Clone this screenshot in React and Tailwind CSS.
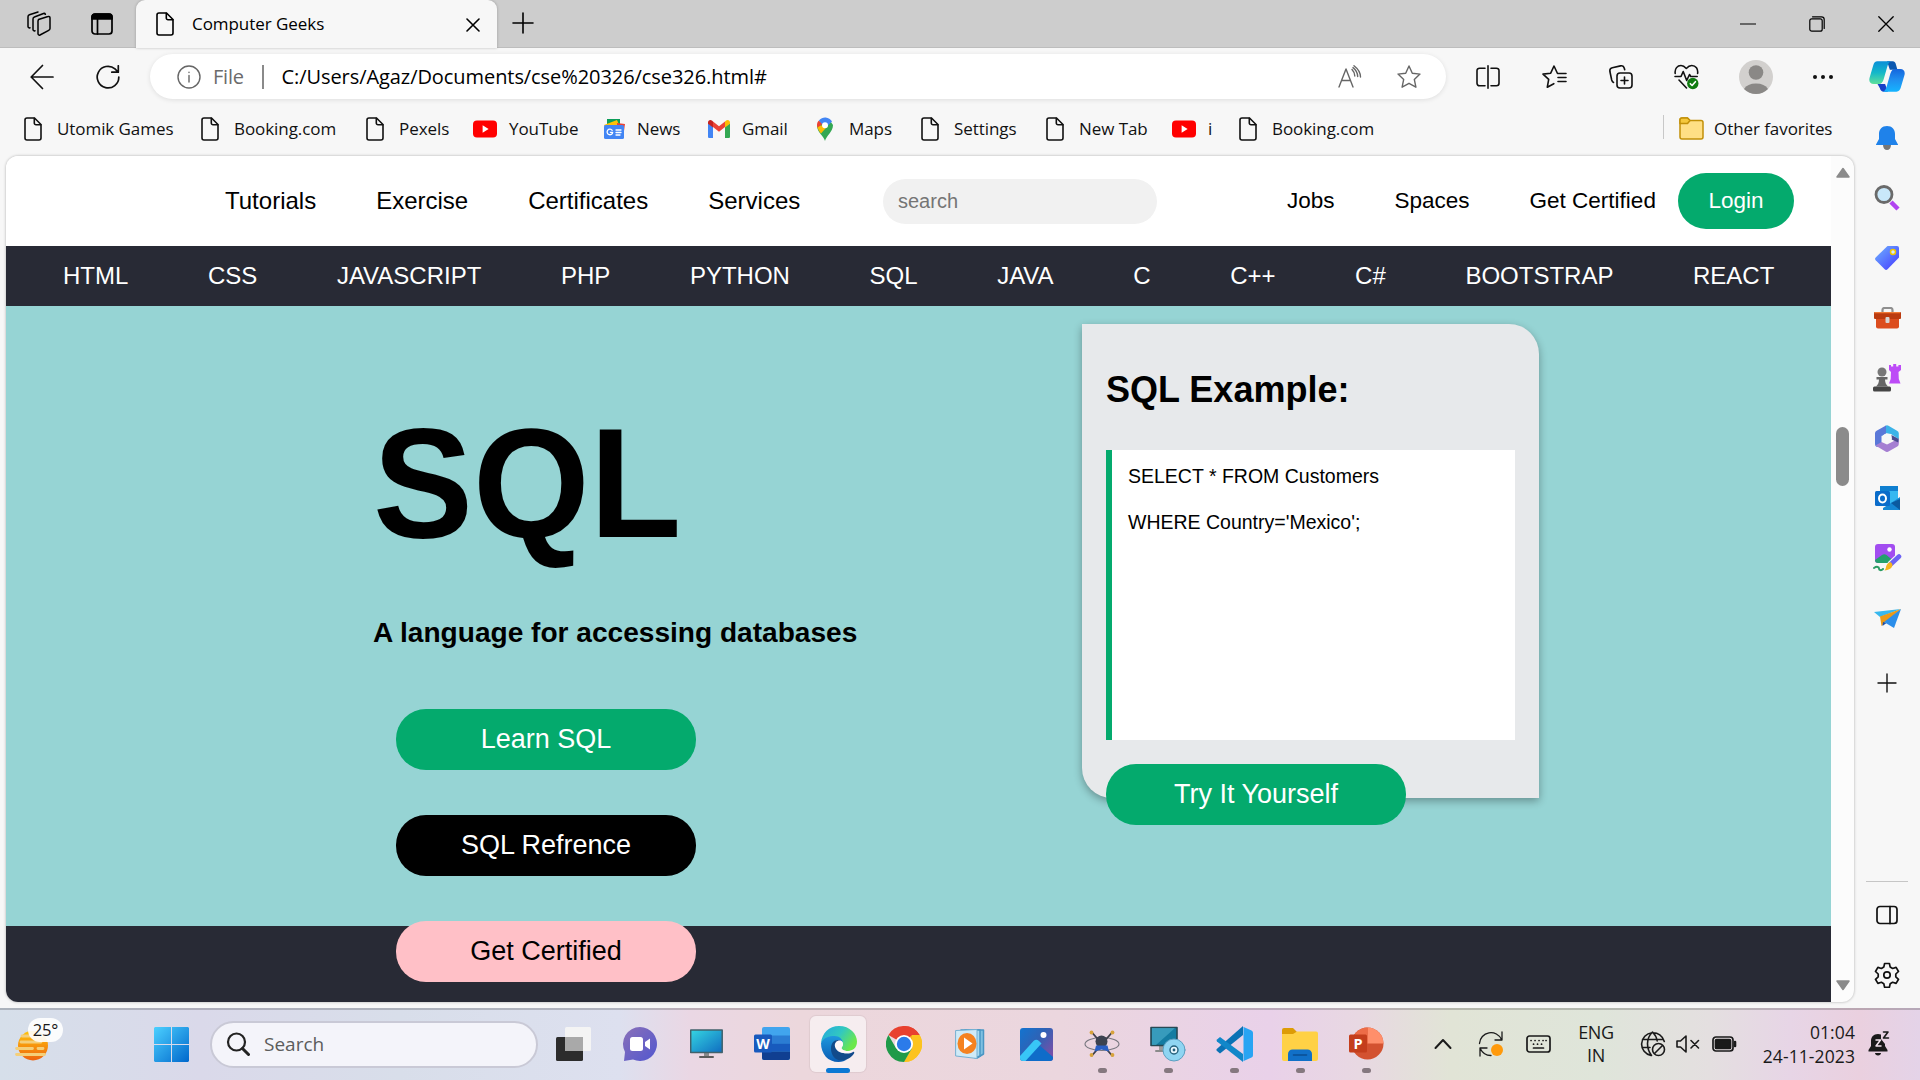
import React from "react";

const UI = "font-['Open_Sans','Noto_Sans',sans-serif]";

function Svg({ w = 24, h = 24, vb = "0 0 24 24", sw = 1.5, children, className = "" }) {
  return (
    <svg width={w} height={h} viewBox={vb} fill="none" stroke="currentColor" strokeWidth={sw} strokeLinecap="round" strokeLinejoin="round" className={"shrink-0 " + className}>
      {children}
    </svg>
  );
}

const Doc = () => (
  <Svg w={18} h={24} vb="0 0 18 24" sw={1.6}>
    <path d="M3 1h7.5L17 7.5V21a2 2 0 0 1-2 2H3a2 2 0 0 1-2-2V3a2 2 0 0 1 2-2Z" />
    <path d="M10.3 1.2V6a1.7 1.7 0 0 0 1.7 1.7h4.8" />
  </Svg>
);

const YouTube = () => (
  <Svg w={24} h={24}>
    <rect x="0" y="3.5" width="24" height="17" rx="4" fill="#f00" stroke="none" />
    <path d="M9.6 8.3v7.4L15.6 12Z" fill="#fff" stroke="none" />
  </Svg>
);

const News = () => (
  <Svg w={22} h={20} vb="0 0 22 20">
    <g stroke="none">
      <rect x="4" y="0" width="13" height="9" fill="#0c9d58" />
      <path d="M1 6 14 1l4 9H3Z" fill="#ffc107" />
      <path d="m14 4 8 1-2 14h-6Z" fill="#ea4335" />
      <rect x="1" y="6" width="20" height="14" rx="1.5" fill="#4285f4" />
    </g>
    <path d="M9.2 11.3a2.8 2.8 0 1 0 .5 2h-2.3M13 11h5M13 13.5h5M13 16h4" stroke="#fff" strokeWidth="1.3" />
  </Svg>
);

const Gmail = () => (
  <Svg w={22} h={18} vb="0 0 22 18">
    <g stroke="none">
      <path d="M0 3v13.5A1.3 1.3 0 0 0 1.3 18H5V7Z" fill="#4285f4" />
      <path d="M22 3v13.5A1.3 1.3 0 0 1 20.7 18H17V7Z" fill="#34a853" />
      <path d="M5 7V1.5L11 6.2 17 1.5V7l-6 4.8Z" fill="#ea4335" />
      <path d="M0 3.500V2.500C0 .3 2.400-.7 4.200.8L5 1.500V7.500L0 3.800Z" fill="#c5221f" />
      <path d="M22 3.500V2.500c0-2.200-2.400-3.200-4.200-1.700L17 1.500v6l5-3.700Z" fill="#fbbc04" />
    </g>
  </Svg>
);

const Maps = () => (
  <Svg w={18} h={24} vb="0 0 18 24">
    <g stroke="none">
      <path d="M9 24C8 19 1 15.500 1 8.500L13 2.200 17 8c0 7-7 11-8 16Z" fill="#34a853" />
      <path d="M1.300 8.500C1.300 12 3.500 14.500 5 16.500L12 8.500Z" fill="#fbbc04" />
      <path d="M2.500 3.800C.6 6 .8 8.800 1.500 10.500L8 6Z" fill="#ea4335" />
      <path d="M2.800 3.500A8 8 0 0 1 16 4.500L9.500 11Z" fill="#4285f4" />
      <circle cx="9" cy="8.300" r="3" fill="#fff" />
    </g>
  </Svg>
);

const Folder = () => (
  <Svg w={25} h={23} vb="0 0 25 23" sw={1.5}>
    <path d="M1 5V3a2 2 0 0 1 2-2h5.500L11 3.500H22a2 2 0 0 1 2 2V20a2 2 0 0 1-2 2H3a2 2 0 0 1-2-2Z" fill="#ffdf85" stroke="#c29008" />
    <path d="M1 6.500V3a2 2 0 0 1 2-2h5.500L11 3.500 8.500 6.500Z" fill="#f5c83c" stroke="#c29008" />
  </Svg>
);

const bookmarks = [
  { w: 177, s: 33, icon: <Doc />, t: "Utomik Games" },
  { w: 165, s: 33, icon: <Doc />, t: "Booking.com" },
  { w: 107, s: 33, icon: <Doc />, t: "Pexels" },
  { w: 130, s: 36, icon: <YouTube />, t: "YouTube" },
  { w: 105, s: 34, icon: <News />, t: "News" },
  { w: 108, s: 34, icon: <Gmail />, t: "Gmail" },
  { w: 105, s: 33, icon: <Maps />, t: "Maps" },
  { w: 125, s: 33, icon: <Doc />, t: "Settings" },
  { w: 126, s: 33, icon: <Doc />, t: "New Tab" },
  { w: 67, s: 36, icon: <YouTube />, t: "i" },
  { w: 150, s: 33, icon: <Doc />, t: "Booking.com" },
];

function TitleBar() {
  return (
    <div className="flex h-12 bg-[#cdcdcd] shadow-[inset_0_-1px_0_#bdbdbd] text-black">
      <div className="flex w-[78px] items-center justify-center">
        <Svg w={26} h={26} vb="0 0 26 26" sw={1.5}>
          <path d="M12.500 8.500 22 5.500a1.500 1.500 0 0 1 2 1.500V17.500a2 2 0 0 1-1.300 1.800L14 24a1.400 1.400 0 0 1-2-1.200V10Z" />
          <path d="M9 19.800c-1 .4-2-.2-2-1.200V8c0-1 .5-1.700 1.400-2L17.500 2.500c.8-.3 1.500 0 1.900.8" />
          <path d="M4 16.800c-1 .4-2-.2-2-1.200V5.800c0-1 .5-1.700 1.400-2L12 1" />
        </Svg>
      </div>
      <div className="flex w-12 items-center justify-center">
        <Svg w={22} h={22} vb="0 0 22 22" sw={1.7}>
          <rect x="1" y="1" width="20" height="20" rx="3" />
          <path d="M1 6V4a3 3 0 0 1 3-3h14a3 3 0 0 1 3 3v2Z" fill="black" />
          <path d="M6.500 6v15" />
        </Svg>
      </div>
      <div className="ml-[10px] flex w-[361px] items-center rounded-t-[9px] bg-[#f7f7f7] pl-5 shadow-[0_0_3px_rgba(0,0,0,0.25)]">
        <Doc />
        <span className={UI + " ml-[18px] w-[134px] whitespace-nowrap pb-px text-[17px] tracking-[-0.05px]"}>Computer Geeks</span>
        <Svg w={14} h={14} vb="0 0 14 14" sw={1.6} className="ml-[140px] mt-px"><path d="m1 1 12 12M13 1 1 13" /></Svg>
      </div>
      <div className="ml-[15px] flex items-center pb-[2px]">
        <Svg w={22} h={22} vb="0 0 22 22" sw={1.6}><path d="M11 1v20M1 11h20" /></Svg>
      </div>
      <div className="ml-auto flex items-center pb-px">
        <div className="flex w-[68px] justify-center"><Svg w={16} h={16} vb="0 0 16 16" sw={1.2}><path d="M.5 8h15" /></Svg></div>
        <div className="flex w-[69px] justify-center">
          <Svg w={16} h={16} vb="0 0 16 16" sw={1.2}>
            <rect x=".8" y="2.800" width="12.400" height="12.400" rx="2" />
            <path d="M3.500.8h9a2.700 2.700 0 0 1 2.700 2.700v9" />
          </Svg>
        </div>
        <div className="flex w-[69px] justify-center"><Svg w={16} h={16} vb="0 0 16 16" sw={1.3}><path d="m.8.8 14.400 14.400M15.200.8.8 15.200" /></Svg></div>
      </div>
    </div>
  );
}

const Slot = ({ c, children }) => <div className={"flex shrink-0 items-center justify-center " + c}>{children}</div>;

function Toolbar() {
  return (
    <div className="flex h-[57px] items-center text-[#111]">
      <Slot c="w-[84px]"><Svg w={24} h={26} vb="0 0 24 26" sw={1.7}><path d="M12.500 1.500 1.200 13l11.300 11.500M1.200 13H23" /></Svg></Slot>
      <Slot c="w-12"><Svg w={24} h={24} sw={1.7}><path d="M22.800 12A10.800 10.800 0 1 1 19 3.900L22 7M22.300.8V7.200h-6.500" /></Svg></Slot>
      <div className="ml-[18px] flex h-[45px] w-[1296px] shrink-0 items-center rounded-full bg-white pl-[27px] pr-[25px] shadow-[0_1px_5px_rgba(0,0,0,0.1)]">
        <Svg w={24} h={24} sw={1.4} className="text-[#666]"><circle cx="12" cy="12" r="11" /><path d="M12 10.500v6.500M12 7.200v.3" /></Svg>
        <span className={UI + " ml-[12px] w-[49px] text-[20px] tracking-[-0.2px] text-[#6b6b6b]"}>File</span>
        <span className="h-6 w-[1.5px] bg-[#8a8a8a]" />
        <span className={UI + " ml-[18px] whitespace-nowrap text-[20px] tracking-[-0.07px] text-black"}>C:/Users/Agaz/Documents/cse%20326/cse326.html#</span>
        <Svg w={24} h={24} sw={1.4} className="ml-auto text-[#666]">
          <path d="m1 22 7-18 7 18M3.700 15.500h8.700M14 4.500c2 2 2.800 4 2.800 6.500M16 .8c4.500 3.500 6.500 7 6.500 11.200M15 2.600c3.500 2.800 4.700 5.500 4.700 9" />
        </Svg>
        <Svg w={24} h={24} sw={1.4} className="ml-[35px] text-[#666]">
          <path d="m12 1 3.300 7.200 7.700.9-5.700 5.300 1.600 7.800L12 18.300l-6.900 3.900 1.600-7.800L1 9.100l7.700-.9Z" />
        </Svg>
      </div>
      <Slot c="ml-2 w-[67px]">
        <Svg w={24} h={24} sw={1.6}><path d="M9 3.200H3.500A2.500 2.500 0 0 0 1 5.700v12.600a2.500 2.500 0 0 0 2.500 2.500H9M15 3.200h5.500A2.500 2.500 0 0 1 23 5.700v12.600a2.500 2.500 0 0 1-2.500 2.500H15M12 .8v22.400" /></Svg>
      </Slot>
      <Slot c="w-[67px]">
        <Svg w={25} h={24} vb="0 0 25 24" sw={1.6}><path d="M18 8.500h-2.500L12 1 8.700 8.200 1 9.100l5.700 5.300-1.400 7.800 6.500-3.500M16 8.500h8M16 12.500h8M16 16.500h8" /></Svg>
      </Slot>
      <Slot c="w-[65px]">
        <Svg w={24} h={24} sw={1.6}>
          <rect x="8" y="8" width="15" height="15" rx="3" /><path d="M15.500 12v7M12 15.500h7M4.500 17.500C3.500 17 3 16.200 2.700 15L.9 6.500C.6 4.500 1.500 3.200 3.300 2.800L11.500.9c2-.4 3.300.5 3.800 2.300l.4 1.500" />
        </Svg>
      </Slot>
      <Slot c="w-[67px]">
        <Svg w={25} h={26} vb="0 0 25 26" sw={1.6}>
          <path d="M1.200 9.500C.5 4.500 3.500 1.500 7 1.500c2.500 0 4 1.500 5.300 3 1.300-1.500 3-3 5.500-3 4 0 6.500 3.500 5.800 8M1 12.500h6l2.200-5 3.500 9 2.800-6 1.200 2h6.500M5 16l7.500 8" />
          <circle cx="18.800" cy="19.500" r="5.700" fill="#107c10" stroke="none" /><path d="m16.300 19.700 1.800 1.800 3.300-3.800" stroke="#fff" />
        </Svg>
      </Slot>
      <Slot c="w-[71px]">
        <Svg w={34} h={34} vb="0 0 34 34">
          <g stroke="none">
            <circle cx="17" cy="17" r="17" fill="#d2d0ce" />
            <circle cx="17" cy="12.500" r="7.300" fill="#8a8886" />
            <path d="M5 29a13 9 0 0 1 24 0 17 17 0 0 1-24 0Z" fill="#8a8886" />
          </g>
        </Svg>
      </Slot>
      <Slot c="w-[63px]"><Svg w={22} h={6} vb="0 0 22 6"><g fill="#111" stroke="none"><circle cx="3" cy="3" r="2" /><circle cx="11" cy="3" r="2" /><circle cx="19" cy="3" r="2" /></g></Svg></Slot>
    </div>
  );
}

function Bookmarks() {
  return (
    <div className={UI + " flex h-[51px] items-center pb-[4px] pl-6 text-[17px] tracking-[-0.07px] text-[#111]"}>
      {bookmarks.map((b, i) => (
        <div key={i} className="flex shrink-0 items-center" style={{ width: b.w }}>
          <span className="shrink-0" style={{ width: b.s }}>{b.icon}</span>
          <span className="whitespace-nowrap">{b.t}</span>
        </div>
      ))}
      <span className="ml-[274px] mb-1 h-6 w-px shrink-0 bg-[#c8c8c8]" />
      <span className="ml-[15px]"><Folder /></span>
      <span className="ml-[10px] whitespace-nowrap">Other favorites</span>
    </div>
  );
}

function Page() {
  return (
    <div className="ml-[6px] flex h-[846px] w-[1848px] overflow-hidden rounded-xl bg-[#fcfcfc] font-['Liberation_Sans',Arial,sans-serif] text-black shadow-[0_0_3px_rgba(0,0,0,0.3)]">
      <div className="w-[1825px]">
        <div className="flex h-[90px] items-center bg-white pl-[219px] text-2xl">
          <div className="flex w-[658px] gap-[60px]">
            <span>Tutorials</span><span>Exercise</span><span>Certificates</span><span>Services</span>
          </div>
          <div className="flex h-[45px] w-[274px] items-center rounded-full bg-[#f1f1f1] pl-[15px] text-[20px] text-[#757575]">search</div>
          <div className="ml-[130px] flex items-center gap-[60px] text-[22.5px]">
            <span>Jobs</span><span>Spaces</span><span>Get Certified</span>
          </div>
          <button className="ml-[22px] h-14 w-[116px] rounded-[28px] bg-[#04aa6d] text-[22.5px] text-white">Login</button>
        </div>
        <div className="flex h-[60px] items-center gap-[79.6px] bg-[#282a35] pl-[57px] text-2xl text-white">
          {["HTML", "CSS", "JAVASCRIPT", "PHP", "PYTHON", "SQL", "JAVA", "C", "C++", "C#", "BOOTSTRAP", "REACT"].map((t) => <span key={t}>{t}</span>)}
        </div>
        <div className="relative z-10 flex h-[620px] items-start bg-[#96d4d4]">
          <div className="w-[1076px] shrink-0 pl-[367px]">
            <h1 className="mt-[104px] w-[310px] origin-[0_127px] scale-y-[1.04] text-[150px] font-bold leading-[150px]">SQL</h1>
            <h3 className="mt-[56px] whitespace-nowrap text-[28.08px] font-bold leading-[34px]">A language for accessing databases</h3>
            <div className="ml-[23px] mt-[59px] flex w-[300px] flex-col gap-[45px] text-[27px]">
              <button className="h-[61px] rounded-[30px] bg-[#04aa6d] text-white">Learn SQL</button>
              <button className="h-[61px] rounded-[30px] bg-black text-white">SQL Refrence</button>
              <button className="h-[61px] rounded-[30px] bg-[#ffc0c7]">Get Certified</button>
            </div>
          </div>
          <div className="mt-[18px] h-[474px] w-[457px] rounded-bl-[30px] rounded-tr-[30px] bg-[#e7e9eb] px-6 pt-[45px] shadow-[0_3px_8px_rgba(0,0,0,0.32)]">
            <h2 className="text-4xl font-bold leading-[42px]">SQL Example:</h2>
            <div className="mt-[39px] h-[290px] border-l-[6px] border-[#04aa6d] bg-white pl-4 pt-[15px] text-[19.5px] leading-[22px]">
              <p>SELECT * FROM Customers</p>
              <p className="mt-6">WHERE Country='Mexico';</p>
            </div>
            <button className="mt-6 h-[61px] w-[300px] rounded-[30px] bg-[#04aa6d] text-[27px] text-white">Try It Yourself</button>
          </div>
        </div>
        <div className="h-[76px] bg-[#282a35]" />
      </div>
      <div className="flex w-[23px] flex-col items-center pb-[11px] pt-[11px]">
        <Svg w={14} h={11} vb="0 0 14 11"><path d="M7 1.500 13 10H1Z" fill="#8b8b8b" stroke="#8b8b8b" /></Svg>
        <div className="mt-[249px] h-[59px] w-[13px] rounded-full bg-[#8b8b8b]" />
        <Svg w={14} h={11} vb="0 0 14 11" className="mt-auto"><path d="M7 9.500 13 1H1Z" fill="#8b8b8b" stroke="#8b8b8b" /></Svg>
      </div>
    </div>
  );
}

function Sidebar() {
  const s = "flex h-[60px] items-center justify-center";
  return (
    <div className="flex h-[960px] w-[66px] flex-col text-[#111]">
      <div className="flex h-[60px] items-center justify-center pb-[3px]">
        <Svg w={36} h={33} vb="0 0 38 34">
          <defs>
            <linearGradient id="cpA" x1="0" y1="0" x2="0" y2="1"><stop offset="0" stopColor="#0a8fd8" /><stop offset=".5" stopColor="#14b8c9" /><stop offset="1" stopColor="#5fe09a" /></linearGradient>
            <linearGradient id="cpB" x1="0" y1="0" x2="0" y2="1"><stop offset="0" stopColor="#1565dd" /><stop offset=".5" stopColor="#2090f0" /><stop offset="1" stopColor="#15b4ff" /></linearGradient>
          </defs>
          <g stroke="none">
            <path d="M19 1h6c2 0 3 1.500 3.500 3.500L30 10h-8Z" fill="#0b57b0" />
            <path d="M9 1h15c-2 0-3.500 2-4.500 5l-4 14c-1 3-2.500 5-5 5H5c-4 0-5.500-3-4.300-7L4.500 5C5.300 2.500 6.500 1 9 1Z" fill="url(#cpA)" />
            <path d="M9 25h8l3 8h-5c-2 0-3-1.500-3.500-3.500Z" fill="#1840c8" />
            <path d="M29 33H14c2 0 3.500-2 4.500-5l4-14c1-3 2.500-5 5-5H33c4 0 5.500 3 4.300 7L33.500 29c-.8 2.500-2 4-4.500 4Z" fill="url(#cpB)" />
          </g>
        </Svg>
      </div>
      <div className={s}>
        <Svg w={24} h={26} vb="0 0 24 26"><g stroke="none"><path d="M8 20h8c0 3-1.800 5-4 5s-4-2-4-5Z" fill="#767676" /><path d="M12 1C7 1 4 4.500 4 9v5l-3 5.500V20h22v-.5L20 14V9c0-4.500-3-8-8-8Z" fill="#1f82ea" /></g></Svg>
      </div>
      <div className={s}>
        <Svg w={26} h={26} vb="0 0 26 26"><path d="m17 17 7 7" stroke="#b144f0" strokeWidth="4.500" strokeLinecap="butt" /><circle cx="10" cy="9.500" r="8" fill="#c9e8fa" stroke="#6a6a6a" strokeWidth="2.800" /></Svg>
      </div>
      <div className={s}>
        <Svg w={24} h={24}>
          <defs><linearGradient id="tg" x1="0" y1="0" x2="1" y2="1"><stop offset="0" stopColor="#6fb4ff" /><stop offset="1" stopColor="#4437ff" /></linearGradient></defs>
          <path d="M12.500 0H22a2 2 0 0 1 2 2v9.500L12.500 23.300a2 2 0 0 1-2.800 0L.7 14.200a2 2 0 0 1 0-2.800Z" fill="url(#tg)" stroke="none" /><circle cx="18" cy="6" r="2.500" fill="#d8e9ff" stroke="#f3c700" />
        </Svg>
      </div>
      <div className={s}>
        <Svg w={27} h={22} vb="0 0 27 22"><path d="M8.500 6V3a2 2 0 0 1 2-2h6a2 2 0 0 1 2 2v3" stroke="#8f8f8f" strokeWidth="2.200" /><g stroke="none"><path d="M2 10h23v9.500a2 2 0 0 1-2 2H4a2 2 0 0 1-2-2Z" fill="#dc4d1e" /><rect x="0" y="5" width="27" height="7" rx="1" fill="#bb3b0f" /><path d="M1 5h25v1.200H0Z" fill="#f17a35" /><rect x="11.500" y="10" width="4" height="6" rx="1" fill="#d6d6d6" /></g></Svg>
      </div>
      <div className={s}>
        <Svg w={28} h={28} vb="0 0 28 28"><g stroke="none"><path d="M16 1h2v1.500h2.200V0h3v2.500h2.200V1H28v5l-2.500 2 .3 7 1.700 4.500H16l1.700-4.500.3-7L16 6Z" fill="#bd4bf7" /><circle cx="9" cy="8" r="4.500" fill="#777" /><path d="M3.500 13h11v2.500H12c0 3 1 5 3 7H3c2-2 3-4 3-7H3.500Z" fill="#666" /><rect x="0" y="22.500" width="18" height="5" rx="1.500" fill="#454545" /></g></Svg>
      </div>
      <div className={s}>
        <Svg w={26} h={27} vb="0 0 26 27"><g stroke="none"><path d="M11.500.8a3 3 0 0 1 3 0L23 5.700a3 3 0 0 1 1.800 2.600v6L17 9 11 8 8 11Z" fill="#3bb3e8" /><path d="M12 .6v8L7.500 11v9L3 22a3 3 0 0 1-2-2.800V8.300a3 3 0 0 1 1.600-2.600Z" fill="#5a78d8" /><path d="m1.500 20.500 6-3.500 5.500 2.500 7-3.500 4.800-2v5a3 3 0 0 1-1.500 2.600l-8.800 5a3 3 0 0 1-3 0Z" fill="#a57fd2" /><path d="m17.500 10 7.300 4v-2l-.5 5.500-6.800-3Z" fill="#4a4a8f" /><circle cx="13" cy="13.500" r="4.800" fill="#f7f7f7" /></g></Svg>
      </div>
      <div className={s}>
        <Svg w={25} h={25} vb="0 0 25 25"><g stroke="none"><rect x="5" y="0" width="18" height="18" fill="#35b8f1" /><path d="M5 0h18v5H5Z" fill="#0f7fd0" /><path d="m25 11-9 6-8 5v2h17Z" fill="#1587d4" /><path d="m25 13-9 4 9 7Z" fill="#0b5a9f" /><rect x="0" y="5" width="15" height="15" rx="1.500" fill="#0a6cca" /></g><ellipse cx="7.500" cy="12.500" rx="3.500" ry="3.900" stroke="#fff" strokeWidth="2" /></Svg>
      </div>
      <div className={s}>
        <Svg w={29} h={28} vb="0 0 29 28"><g stroke="none"><rect x="2" y="0" width="20" height="19" rx="3" fill="#a24df0" /><path d="m2 16 7-5a4 4 0 0 1 4.500 0l6 5-3 3H5a3 3 0 0 1-3-3Z" fill="#24a06c" /><circle cx="16.500" cy="5.500" r="2.200" fill="#fff" /></g><path d="m26 12.500-8 7.500" stroke="#f7f7f7" strokeWidth="7" /><path d="m26 12.500-8 7.500" stroke="#6d63f5" strokeWidth="4.600" /><path d="M18 18.500c3 2 1.500 7.500-6.500 8 2-2 1-4 2.500-6s3-2.500 4-2Z" fill="#f4b51e" stroke="none" /><path d="M1 24c3-2 5-1 5 .5s2 2.500 4 .5" stroke="#2a9c63" strokeWidth="2" /></Svg>
      </div>
      <div className={s}>
        <Svg w={27} h={20} vb="0 0 27 20"><g stroke="none"><path d="M27 1 0 4l6 5Z" fill="#37b8ee" /><path d="M27 1 6 8.500 7.500 18Z" fill="#eb9a17" /><path d="m9 14-.5 4 4-3Z" fill="#1a4fb0" /><path d="m27 1-17 13 10 6Z" fill="#2b8eea" /></g></Svg>
      </div>
      <div className="flex h-[70px] items-center justify-center"><Svg w={20} h={20} vb="0 0 20 20" sw={1.4}><path d="M10 1v18M1 10h18" /></Svg></div>
      <div className="mt-auto flex flex-col items-center pb-[3px]">
        <span className="mb-[3px] h-px w-[42px] bg-[#c6c6c6]" />
        <div className={s}><Svg w={22} h={20} vb="0 0 22 20" sw={1.7}><rect x="1" y="1.500" width="20" height="17" rx="3" /><path d="M14 1.500v17" /></Svg></div>
        <div className={s}>
          <Svg w={26} h={26} vb="0 0 26 26" sw={1.7}>
            <circle cx="13" cy="13" r="3.200" />
            <path d="M10.600 1.500h4.800l.8 3.600 2.400 1.400 3.500-1.100 2.400 4.100-2.700 2.500v2.800l2.700 2.500-2.400 4.100-3.500-1.100-2.400 1.400-.8 3.600h-4.800l-.8-3.600-2.400-1.400-3.500 1.100-2.400-4.100L4.200 14.800V12L1.500 9.500l2.400-4.100 3.500 1.100 2.400-1.400Z" />
          </Svg>
        </div>
      </div>
    </div>
  );
}

const appIcons = [
  <Svg w={36} h={36} vb="0 0 36 36"><g stroke="none"><rect x="0" y="11" width="27" height="24" rx="1.500" fill="#2c2c2c" /><rect x="9" y="1" width="26" height="24" rx="1.500" fill="#f4f4f4" /><path d="M9 11h18v14H9Z" fill="#a9a9a9" /></g></Svg>,
  <Svg w={34} h={34} vb="0 0 34 34"><defs><linearGradient id="tm" x1="0" y1="0" x2="1" y2="1"><stop offset="0" stopColor="#8a70b8" /><stop offset="1" stopColor="#5257cf" /></linearGradient></defs><path d="M17 0a17 17 0 1 1-7 32.500L1 34l1-9A17 17 0 0 1 17 0Z" fill="url(#tm)" stroke="none" /><rect x="7" y="10" width="13" height="14" rx="2.500" fill="#fff" stroke="none" /><path d="m22 15 5-3.500v11L22 19Z" fill="#fff" stroke="none" /></Svg>,
  <Svg w={33} h={30} vb="0 0 33 30"><defs><linearGradient id="pc" x1="0" y1="0" x2="1" y2="1"><stop offset="0" stopColor="#35d6e2" /><stop offset="1" stopColor="#0f6cc0" /></linearGradient></defs><path d="M14 22h5v5h-5Z" fill="#8b8b8b" stroke="none" /><path d="M10 28h13" stroke="#5c5c5c" strokeWidth="2" /><rect x=".7" y="1" width="31.500" height="22.500" fill="url(#pc)" stroke="#42616b" /></Svg>,
  <Svg w={36} h={34} vb="0 0 36 34"><g stroke="none"><rect x="8" y="0" width="28" height="33" rx="2" fill="#41a5ee" /><path d="M8 8.500h28v8H8Z" fill="#2b7cd3" /><path d="M8 16.500h28v8H8Z" fill="#185abd" /><path d="M8 24.500h28V31a2 2 0 0 1-2 2H10a2 2 0 0 1-2-2Z" fill="#103f91" /><rect x="0" y="7.500" width="18" height="18" rx="1.500" fill="#185abd" /></g><text x="9" y="21.500" textAnchor="middle" fontFamily="Open Sans" fontWeight="700" fontSize="14" fill="#fff" stroke="none">W</text></Svg>,
  <Svg w={37} h={36} vb="0 0 37 36"><defs><linearGradient id="ed" x1="0" y1="0" x2="1" y2=".5"><stop offset="0" stopColor="#22a7e0" /><stop offset=".55" stopColor="#32c8c0" /><stop offset="1" stopColor="#6be84a" /></linearGradient><linearGradient id="ee" x1="0" y1="0" x2="0" y2="1"><stop offset="0" stopColor="#1f98dd" /><stop offset="1" stopColor="#0a5cb4" /></linearGradient></defs><g stroke="none"><path d="M1 17C2 7 9 0 19 0c11 0 18 8 18 15.500 0 6-4 9.500-9 9.500-4 0-6.500-1.500-6.500-3 0-1 1.500-1.500 1.500-4 0-3-3-6-7.500-6C8 12 3 14 1 17Z" fill="url(#ed)" /><path d="M1 17c3-5.500 8-7 13.500-7 5 0 8.500 3.500 8.500 8 0-2-2-4-4.500-4-4 0-6 4-6 8 0 7 6 11.500 12 11.500 1 0 2 0 3-.5-2.500 1.800-5.500 3-9 3C8 36 1 28 1 17Z" fill="url(#ee)" /><path d="M11 22.500c0-4.500 2.500-8.500 6.500-8.500 1.500 0 2.800.3 3.500 1-3 1-4.500 4.500-2.500 8 2.500 4.500 9.500 6 14.500 3 1-.5 1.700.4 1 1.500-2.500 4-7.500 7-12.500 7C15 34.500 11 29 11 22.500Z" fill="#114a8b" /><path d="M14.800 19.500c0-2.800 2-5 4.500-5 2.200 0 3.700 1.500 3.700 3.500 0 2.500-1.500 3-1.500 4 0 2 4 3.500 8 3 2-.3 4-1 5-1.500-7 6.500-19 4-19.700-4Z" fill="#fdf6f8" /></g></Svg>,
  <Svg w={36} h={36} vb="0 0 36 36"><g stroke="none"><path d="M18 18 2.400 9a18 18 0 0 1 31.200 0Z" fill="#e8402f" /><path d="M18 0A18 18 0 0 1 33.600 9H18Z" fill="#e8402f" /><path d="m18 18 15.600-9A18 18 0 0 1 18 36l7.800-13.500V9Z" fill="#fcc31e" /><path d="M33.600 9A18 18 0 0 1 18 36L25.800 22.500 26 9Z" fill="#fcc31e" /><path d="M2.400 9A18 18 0 0 0 18 36l7.800-13.500H10.200Z" fill="#1f9a49" /><circle cx="18" cy="18" r="9" fill="#fff" /><circle cx="18" cy="18" r="7.200" fill="#2b7bea" /></g></Svg>,
  <Svg w={30} h={32} vb="0 0 30 32"><path d="M10 2h18.500v24L22 30" fill="#7fc0e2" stroke="#4a96c4" /><path d="M6 2h19v26l-5 2" fill="#a9daf0" stroke="#4a96c4" /><path d="M1 2.500 22 1.500V30.500L1 28Z" fill="#cfeaf7" stroke="#75b0d2" strokeWidth="1" /><ellipse cx="12" cy="15.500" rx="9.500" ry="10.500" fill="#f58220" stroke="none" /><path d="M9 9.500v12L17.500 15.500Z" fill="#fff" stroke="none" /></Svg>,
  <Svg w={33} h={33} vb="0 0 33 33"><defs><linearGradient id="ph" x1="0" y1="0" x2="1" y2=".8"><stop offset="0" stopColor="#1274d0" /><stop offset=".5" stopColor="#2f62b5" /><stop offset="1" stopColor="#7c4fa8" /></linearGradient></defs><g stroke="none"><rect width="33" height="33" rx="3" fill="url(#ph)" /><path d="m18 16 15 13v1a3 3 0 0 1-3 3H5Z" fill="#0f6cc9" /><path d="M0 28 13.500 13a4 4 0 0 1 5.500 0l2.500 2.500L5.500 33H3a3 3 0 0 1-3-3Z" fill="#38c6f7" /><circle cx="23.500" cy="7" r="3" fill="#fff" /></g></Svg>,
  <Svg w={36} h={28} vb="0 0 36 28"><g stroke="#77777f" strokeWidth="1.100"><ellipse cx="18" cy="14" rx="17" ry="6.500" /><path d="m8 2.500 20 23M28 2.500 8 25.500" strokeWidth="1.800" stroke="#3f3f48" /></g><circle cx="17.500" cy="11.500" r="6" fill="#3c4250" stroke="none" /><path d="M12 15.500h11.500l1.500 6-7.500-2-7 2Z" fill="#2a5fc4" stroke="none" /><g fill="#d8a33c" stroke="none"><circle cx="7.500" cy="2.500" r="1.900" /><circle cx="28.500" cy="2.500" r="1.900" /><circle cx="7.500" cy="25" r="1.900" /><circle cx="28.500" cy="25" r="1.900" /></g></Svg>,
  <Svg w={36} h={36} vb="0 0 36 36"><path d="M9 20h7v4H9Z" fill="#9b9b9b" stroke="none" /><rect x="1" y="1.500" width="26" height="18" fill="#147ca2" stroke="#274955" strokeWidth="1.600" /><path d="M2 2h23L6 19H2Z" fill="#4fb1cd" stroke="none" opacity=".6" /><path d="M6 25h10" stroke="#8b8b8b" strokeWidth="2" /><circle cx="24" cy="24" r="11" fill="#8fd5f2" stroke="#5c9fc1" strokeWidth="1" /><circle cx="24" cy="24" r="4" stroke="#24607c" fill="#e7f8ff" strokeWidth="1.400" /><circle cx="24" cy="24" r="1.400" fill="#24607c" stroke="none" /></Svg>,
  <Svg w={37} h={36} vb="0 0 37 36"><g stroke="none"><path d="M27 0v9L4 27.500 1 25a1.500 1.500 0 0 1 0-2.200Z" fill="#0b72b5" /><path d="M1 13.500 4 11l23 17v8L1 15.500a1.500 1.500 0 0 1 0-2Z" fill="#1187c9" /><path d="M26 .3 35.500 4.500A2.500 2.500 0 0 1 37 6.800v22.400a2.500 2.500 0 0 1-1.500 2.300L26 35.800c1 .3 1.500-.8 1.500-1.800V2c0-1-.5-2-1.500-1.700Z" fill="#29a4f3" /></g></Svg>,
  <Svg w={36} h={33} vb="0 0 36 33"><g stroke="none"><path d="M0 2a2 2 0 0 1 2-2h9l4 4-4 4H0Z" fill="#dd9c06" /><path d="M0 6h11l4-2.500h19a2 2 0 0 1 2 2V31a2 2 0 0 1-2 2H2a2 2 0 0 1-2-2Z" fill="#ffd145" /><path d="M6 33v-7a4.500 4.500 0 0 1 4.500-4.500h15A4.500 4.500 0 0 1 30 26v7Z" fill="#1170c8" /></g><path d="M11.500 27h13" stroke="#0a4d92" strokeWidth="1.600" /></Svg>,
  <Svg w={35} h={34} vb="0 0 35 34"><g stroke="none"><circle cx="18.500" cy="16.500" r="16" fill="#d35230" /><path d="M18.500.5a16 16 0 0 1 16 16h-16Z" fill="#ff8f6b" /><path d="M18.500.5v16h-16a16 16 0 0 1 16-16Z" fill="#ed6c47" /><rect x="0" y="7.500" width="18" height="18" rx="1.500" fill="#c43e1c" /></g><text x="9" y="21.800" textAnchor="middle" fontFamily="Open Sans" fontWeight="700" fontSize="14.500" fill="#fff" stroke="none">P</text></Svg>,
];

function Taskbar() {
  return (
    <div className={UI + " relative flex h-[72px] items-center border-t-2 border-black/20 bg-[linear-gradient(90deg,#d6dfea_0px,#dad9ea_200px,#d8deea_400px,#dde0ef_620px,#ead7e4_690px,#ecd7dc_800px,#ebd6de_1060px,#e9d1e9_1270px,#e8d8e2_1360px,#e1e4d6_1450px,#dfe5da_1600px,#e4dfe0_1710px,#e7d5e6_1790px,#ead0df_1860px,#e4d3e8_1920px)] pb-[2px] text-[#1a1a1a]"}>
      <div className="relative w-[154px] shrink-0">
        <Svg w={34} h={30} vb="0 0 34 30" className="ml-[15px] mt-1">
          <defs><linearGradient id="sn" x1="0" y1="0" x2="0" y2="1"><stop offset="0" stopColor="#ffc60a" /><stop offset="1" stopColor="#ee6410" /></linearGradient></defs>
          <circle cx="18" cy="14.500" r="15" fill="url(#sn)" stroke="none" />
          <path d="M7 5h20M6 11h20M1.500 17.500h16M23 17.500h5M1.500 23.500h28" stroke="#f4cf7a" strokeWidth="2.800" />
        </Svg>
        <span className="absolute left-[28px] top-[-9px] flex h-6 w-[35px] items-center justify-center rounded-full bg-white/90 text-[16.5px] tracking-[-0.2px]">25°</span>
      </div>
      <Svg w={35} h={35} vb="0 0 35 35">
        <defs><linearGradient id="wn" gradientUnits="userSpaceOnUse" x1="0" y1="0" x2="35" y2="35"><stop offset="0" stopColor="#4cd0ff" /><stop offset="1" stopColor="#0067cc" /></linearGradient></defs>
        <g fill="url(#wn)" stroke="none"><path d="M1 0h16v17H0V1Z" /><path d="M18 0h16l1 1v16H18Z" /><path d="M0 18h17v17H1l-1-1Z" /><path d="M18 18h17v16l-1 1H18Z" /></g>
      </Svg>
      <div className="ml-[21px] flex h-[47px] w-[328px] items-center rounded-full border-2 border-[#c9c9d6] bg-[#f4f4fa] pl-[14px] text-[19px] text-[#5c5c5c]">
        <Svg w={24} h={24} sw={2.2} className="text-[#222]"><circle cx="10.500" cy="10" r="8.500" /><path d="m16.500 16.500 6 6" strokeWidth="3" /></Svg>
        <span className="ml-[14px]">Search</span>
      </div>
      <div className="ml-[3px] flex h-full">
        {appIcons.map((ic, i) => (
          <div key={i} className="relative flex w-[66px] items-center justify-center">
            {i === 4 && <span className="absolute left-[5px] top-[6px] h-[56px] w-14 rounded-md bg-white/55 shadow-[0_0_1px_1px_rgba(0,0,0,0.06)]" />}
            <span className="relative">{ic}</span>
            {i === 4 && <span className="absolute left-[21px] top-[58px] h-[5px] w-6 rounded-full bg-[#0a78d4]" />}
            {i > 7 && <span className="absolute left-[29px] top-[58px] h-[5px] w-[9px] rounded-full bg-[#85787f]" />}
          </div>
        ))}
      </div>
      <div className="ml-auto flex h-full items-center">
        <Svg w={18} h={12} vb="0 0 18 12" sw={2}><path d="m1.500 10 7.500-8 7.500 8" /></Svg>
        <Svg w={26} h={26} vb="0 0 26 26" sw={1.3} className="ml-[26px]"><path d="M1.500 12.500A11.500 11.500 0 0 1 23.500 8.500M24 1v8h-7M13 24.500A11.500 11.500 0 0 1 2.500 18M2 25v-8h7" /><circle cx="19" cy="19" r="6" fill="#ff9a0c" stroke="none" /></Svg>
        <Svg w={25} h={18} vb="0 0 25 18" sw={1.7} className="ml-[22px]"><rect x="1" y="1" width="23" height="16" rx="2.500" /><path d="M5 5.500h.1M9 5.500h.1M13 5.500h.1M17 5.500h.1M20 5.500h.1M7.500 9.200h.1M11.500 9.200h.1M15.500 9.200h.1M7.500 13h10" /></Svg>
        <div className="ml-[23px] w-[44px] text-center text-[18px] leading-[23px] tracking-[-0.4px]">ENG<br />IN</div>
        <Svg w={26} h={26} vb="0 0 26 26" sw={1.6} className="ml-[22px]"><path d="M11 24.500A11.500 11.500 0 1 1 24.300 10.500M2.500 8.500h20.700M2.500 16.500H10M12.500 1C9 4.500 7.500 8.500 7.500 12.500s1 8 4 12M12.500 1c2.500 2.500 4.200 5.500 4.700 9" /><circle cx="18.500" cy="18.500" r="6" /><path d="m14.500 22.500 8-8" /></Svg>
        <Svg w={24} h={20} vb="0 0 24 20" sw={1.6} className="ml-[10px]"><path d="M1 7v6h3.500L10 18V2L4.500 7ZM15 6.500l7.500 7.500M22.500 6.500 15 14" /></Svg>
        <Svg w={25} h={16} vb="0 0 25 16" sw={1.7} className="ml-[12px]"><rect x="1" y="1" width="20" height="14" rx="3" /><rect x="3.500" y="3.500" width="15" height="9" rx="1" fill="currentColor" /><path d="M23 6v4" strokeWidth="2.600" /></Svg>
        <div className="ml-[18px] w-[100px] whitespace-nowrap text-right text-[17.5px] leading-[24px] tracking-[0.1px]">01:04<br />24-11-2023</div>
        <Svg w={22} h={26} vb="0 0 22 26" className="ml-[13px] mr-[30px]">
          <path d="M10 3C5.500 3 3 6 3 10v5L.5 19v1.500h19V19L17 15v-2l-4-5V3.500Z" fill="#1a1a1a" stroke="none" /><path d="M7 22h6c0 1.500-1.300 2.500-3 2.500S7 23.500 7 22Z" fill="#1a1a1a" stroke="none" />
          <path d="M8 9h4.500l-4.500 6h5" stroke="#f3e4ee" strokeWidth="1.500" /><path d="M15.500 1h4.500l-4.500 6h5" strokeWidth="1.600" />
        </Svg>
      </div>
    </div>
  );
}

export default function App() {
  return (
    <div className="h-[1080px] w-[1920px] overflow-hidden bg-[#f7f7f7]">
      <TitleBar />
      <div className="flex h-[960px]">
        <div className="w-[1854px]">
          <Toolbar />
          <Bookmarks />
          <Page />
        </div>
        <Sidebar />
      </div>
      <Taskbar />
    </div>
  );
}
